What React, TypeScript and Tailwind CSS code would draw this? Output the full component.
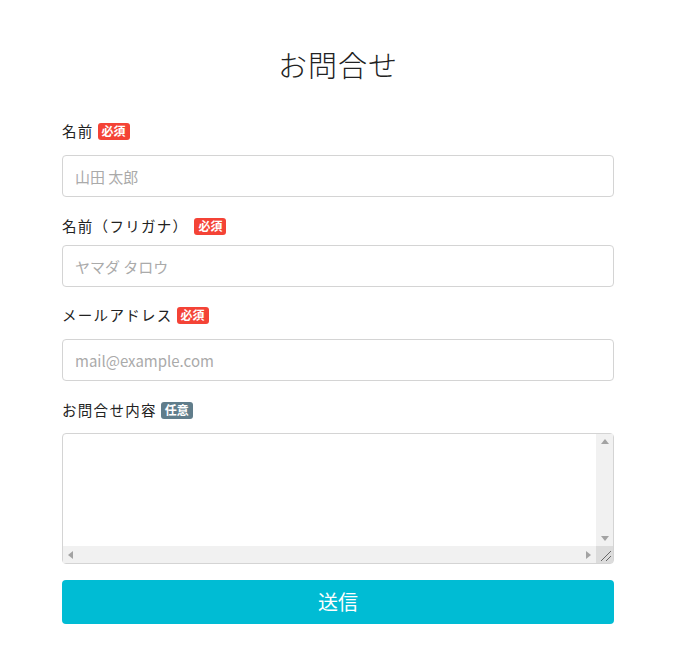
const font = {
  fontFamily:
    '"Noto Sans CJK JP", "Noto Sans", "Liberation Sans", sans-serif',
};

const Badge = ({ kind }: { kind: "required" | "optional" }) => (
  <span
    className={`ml-[4px] inline-flex h-[17px] items-center rounded-[3px] px-[4px] text-[12px] font-bold leading-none tracking-normal text-white ${
      kind === "required" ? "bg-[#f44336]" : "bg-[#607d8b]"
    }`}
  >
    {kind === "required" ? "必須" : "任意"}
  </span>
);

const inputCls =
  "block h-[42px] w-full rounded-[4px] border border-[#d4d4d4] bg-white px-3 text-[15px] text-[#333] outline-none placeholder:text-[#aaa]";

const labelCls =
  "flex h-[20px] items-center text-[14.5px] tracking-[1.3px] text-[#222]";

// fake classic scrollbars drawn over the textarea
const Scrollbars = () => (
  <div className="pointer-events-none absolute inset-[1px]">
    <div className="absolute bottom-[17px] right-0 top-0 flex w-[17px] flex-col items-center justify-between bg-[#f1f1f1] py-[5px]">
      <svg width="8" height="5" viewBox="0 0 8 5">
        <path d="M0 5 L4 0 L8 5 Z" fill="#a3a3a3" />
      </svg>
      <svg width="8" height="5" viewBox="0 0 8 5">
        <path d="M0 0 L4 5 L8 0 Z" fill="#a3a3a3" />
      </svg>
    </div>
    <div className="absolute bottom-0 left-0 right-[17px] flex h-[17px] items-center justify-between bg-[#f1f1f1] px-[5px]">
      <svg width="5" height="8" viewBox="0 0 5 8">
        <path d="M5 0 L0 4 L5 8 Z" fill="#a3a3a3" />
      </svg>
      <svg width="5" height="8" viewBox="0 0 5 8">
        <path d="M0 0 L5 4 L0 8 Z" fill="#a3a3a3" />
      </svg>
    </div>
    <div className="absolute bottom-0 right-0 h-[17px] w-[17px] bg-[#dcdcdc]">
      <svg width="17" height="17" viewBox="0 0 17 17">
        <path d="M5 15 L15 5 M10 15 L15 10" stroke="#666" strokeWidth="1" />
      </svg>
    </div>
  </div>
);

export default function App() {
  return (
    <div className="min-h-[670px] bg-white text-[#222]" style={font}>
      <div className="ml-[62px] w-[552px] pt-[44px]">
        <h1 className="h-[40px] text-center text-[29px] font-light leading-[40px] tracking-[1px] text-[#222]">
          お問合せ
        </h1>

        <form className="mt-[37px]" onSubmit={(e) => e.preventDefault()}>
          <label className={labelCls}>
            名前
            <Badge kind="required" />
          </label>
          <input className={`mt-[14px] ${inputCls}`} placeholder="山田 太郎" />

          <label className={`mt-[19px] ${labelCls}`}>
            名前（フリガナ）
            <span className="ml-[2px]" />
            <Badge kind="required" />
          </label>
          <input className={`mt-[9px] ${inputCls}`} placeholder="ヤマダ タロウ" />

          <label className={`mt-[18px] ${labelCls}`}>
            メールアドレス
            <Badge kind="required" />
          </label>
          <input
            className={`mt-[14px] ${inputCls}`}
            placeholder="mail@example.com"
          />

          <label className={`mt-[19px] ${labelCls}`}>
            お問合せ内容
            <Badge kind="optional" />
          </label>
          <div className="relative mt-[13px] h-[131px]">
            <textarea className="block h-full w-full resize-none rounded-[4px] border border-[#d4d4d4] bg-white px-3 py-2 text-[15px] outline-none" />
            <Scrollbars />
          </div>

          <button
            type="submit"
            className="mt-[16px] block h-[44px] w-full rounded-[4px] bg-[#00bcd4] text-[20px] text-white"
          >
            送信
          </button>
        </form>
      </div>
    </div>
  );
}
